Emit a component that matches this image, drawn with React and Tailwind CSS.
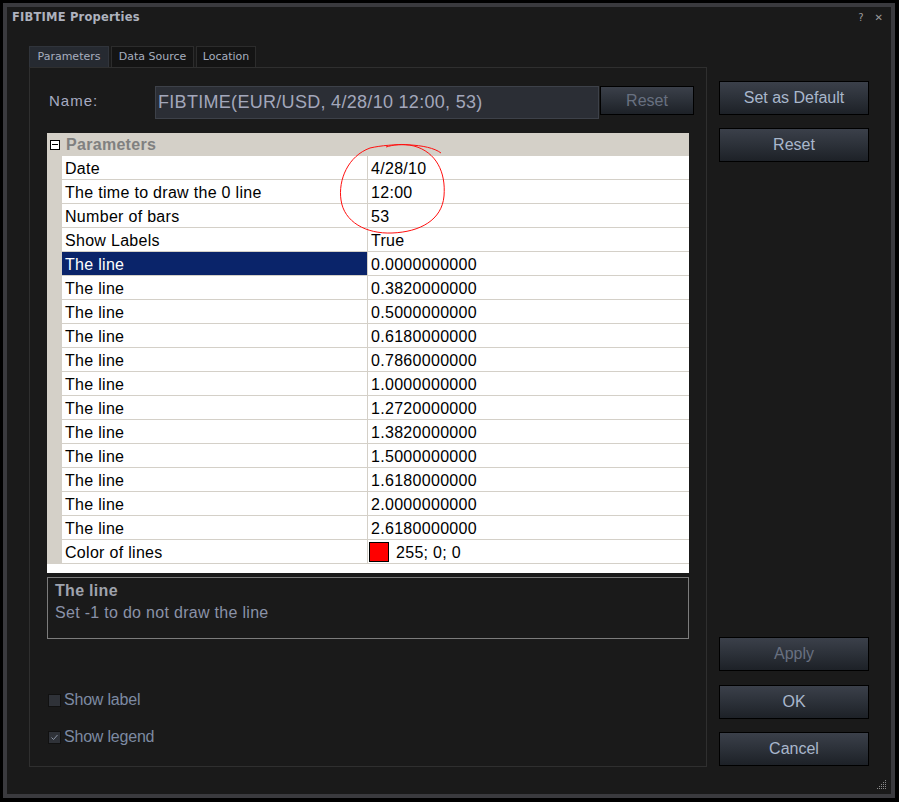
import React from "react";

const sans = "font-['Liberation_Sans',Arial,sans-serif]";
const dv = "font-['DejaVu_Sans',Verdana,sans-serif]";

const rows = [
  ["Date", "4/28/10"],
  ["The time to draw the 0 line", "12:00"],
  ["Number of bars", "53"],
  ["Show Labels", "True"],
  ["The line", "0.0000000000", true],
  ["The line", "0.3820000000"],
  ["The line", "0.5000000000"],
  ["The line", "0.6180000000"],
  ["The line", "0.7860000000"],
  ["The line", "1.0000000000"],
  ["The line", "1.2720000000"],
  ["The line", "1.3820000000"],
  ["The line", "1.5000000000"],
  ["The line", "1.6180000000"],
  ["The line", "2.0000000000"],
  ["The line", "2.6180000000"],
];

function Button({ children, disabled, className = "" }) {
  return (
    <button
      className={`w-[150px] h-[34px] border border-black bg-gradient-to-b from-[#3b404a] via-[#2c3139] to-[#1d2127] text-[16px] ${sans} ${
        disabled ? "text-[#687080]" : "text-[#a9b7cc]"
      } ${className}`}
    >
      {children}
    </button>
  );
}

function Row({ label, value, selected, children }) {
  return (
    <div className="flex h-[24px] bg-white">
      <div className="w-[15px] bg-[#d4d0c8]" />
      <div
        className={`w-[306px] border-b border-r border-[#d4d0c8] pl-[3px] pt-px leading-[23px] ${
          selected ? "bg-[#0a246a] text-white" : "text-black"
        }`}
      >
        {label}
      </div>
      <div className="flex-1 border-b border-[#d4d0c8] pl-[3px] pt-px leading-[23px] text-black flex items-center">
        {children || value}
      </div>
    </div>
  );
}

export default function App() {
  return (
    <div className="relative w-[899px] h-[802px] bg-black pt-[3px] pl-[3px] pr-[4px] pb-[4px]">
      <div className="relative h-full border-4 border-[#3a3a3e] bg-[#1a1a1a] flex flex-col">
        <div className="h-[20px] flex items-center justify-between pl-[5px] pr-[8px] pt-[1px]">
          <span className={`${dv} text-[11.5px] tracking-[0.2px] font-bold text-[#aeb2be]`}>FIBTIME Properties</span>
          <div className={`${dv} flex gap-[11px] text-[10px] text-[#9a9a9a]`}>
            <span>?</span>
            <span className="font-bold">✕</span>
          </div>
        </div>

        <div className="flex mt-[19px] pl-[22px]">
          <div className="w-[678px] flex flex-col">
            <div className={`${dv} flex gap-[2px] h-[21px] text-[11px] text-[#a6aebf]`}>
              <div className="w-[80px] bg-[#262a31] border-t border-l border-r border-[#30343b] flex items-center justify-center">
                Parameters
              </div>
              <div className="w-[83px] bg-[#141414] border-t border-l border-r border-[#2c2c2c] flex items-center justify-center">
                Data Source
              </div>
              <div className="w-[60px] bg-[#141414] border-t border-l border-r border-[#2c2c2c] flex items-center justify-center">
                Location
              </div>
            </div>

            <div className="h-[700px] border border-[#2f2f2f] px-[17px] flex flex-col">
              <div className="flex mt-[18px] pl-[2px]">
                <div className={`shrink-0 w-[106px] pt-[4px] text-[15px] tracking-[1px] text-[#a7abc2] ${sans}`}>Name:</div>
                <div
                  className={`shrink-0 w-[444px] h-[33px] bg-[#2b2e35] border border-[#3d4149] pl-[2px] flex items-center text-[18px] tracking-[0.3px] text-[#a3a7bb] ${sans}`}
                >
                  FIBTIME(EUR/USD, 4/28/10 12:00, 53)
                </div>
                <button
                  className={`shrink-0 ml-px w-[94px] h-[29px] border border-black bg-gradient-to-b from-[#3b404a] via-[#2c3139] to-[#1d2127] text-[16px] text-[#687080] ${sans}`}
                >
                  Reset
                </button>
              </div>

              <div className={`mt-[14px] w-[642px] bg-white text-[16px] tracking-[0.3px] ${sans}`}>
                <div className="flex h-[23px] bg-[#d4d0c8] items-center">
                  <div className="w-[15px] flex justify-center">
                    <div className="w-[10px] h-[10px] border border-black bg-white flex items-center justify-center">
                      <div className="w-[6px] h-px bg-black" />
                    </div>
                  </div>
                  <span className="pl-[4px] font-bold text-[#808080]">Parameters</span>
                </div>
                {rows.map(([l, v, s], i) => (
                  <Row key={i} label={l} value={v} selected={s} />
                ))}
                <Row label="Color of lines">
                  <div className="w-[20px] h-[20px] bg-[#ff0000] border border-black ml-[-2px] mr-[7px]" />
                  255; 0; 0
                </Row>
                <div className="h-[9px] bg-white" />
              </div>

              <div className={`mt-[4px] w-[642px] h-[62px] border border-[#7c7c7c] pl-[7px] pt-[3px] tracking-[0.3px] ${sans}`}>
                <div className="text-[16px] font-bold text-[#9fa3ad] leading-[20px]">The line</div>
                <div className="text-[16px] text-[#8a92a8] leading-[22px] mt-[1px]">Set -1 to do not draw the line</div>
              </div>

              <div className={`mt-[49px] flex items-center gap-[3px] text-[16px] text-[#7d8aa2] tracking-[-0.2px] ${sans}`}>
                <div className="ml-[1px] w-[13px] h-[13px] bg-[#2f3238] border border-[#111]" />
                <span>Show label</span>
              </div>
              <div className={`mt-[13px] flex items-center gap-[3px] text-[16px] text-[#7d8aa2] tracking-[-0.2px] ${sans}`}>
                <div className="ml-[1px] w-[13px] h-[13px] bg-[#2f3238] border border-[#111] flex items-center justify-center">
                  <svg width="9" height="9" viewBox="0 0 9 9">
                    <path d="M1.5 4.5 L3.5 6.5 L7.5 2" stroke="#8a93a3" strokeWidth="1" fill="none" />
                  </svg>
                </div>
                <span>Show legend</span>
              </div>
            </div>
          </div>

          <div className="ml-[12px] flex flex-col">
            <Button className="mt-[35px]">Set as Default</Button>
            <Button className="mt-[13px]">Reset</Button>
            <Button disabled className="mt-[475px]">Apply</Button>
            <Button className="mt-[14px]">OK</Button>
            <Button className="mt-[13px]">Cancel</Button>
          </div>
        </div>

        <svg className="absolute right-[4px] bottom-[4px]" width="10" height="10" viewBox="0 0 10 10">
          {[
            [8, 0], [6, 2], [8, 2], [4, 4], [6, 4], [8, 4], [2, 6], [4, 6], [6, 6], [8, 6], [0, 8], [2, 8], [4, 8], [6, 8], [8, 8],
          ].map(([x, y], i) => (
            <rect key={i} x={x} y={y} width="1" height="1" fill="#8a8a8a" />
          ))}
        </svg>
      </div>

      <svg className="absolute left-0 top-0 pointer-events-none" width="899" height="802">
        <path
          d="M441 153 C428 143 392 143 370 148 C348 156 338 180 341 200 C344 222 366 234 392 233 C420 232 442 220 444 196 C446 172 436 152 414 146 C402 143 393 145 386 147"
          stroke="#ff1010"
          strokeWidth="1"
          fill="none"
        />
      </svg>
    </div>
  );
}
